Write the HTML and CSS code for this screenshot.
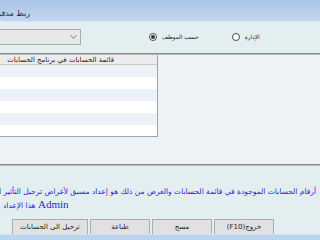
FILE: index.html
```html
<!DOCTYPE html>
<html>
	<head>
		<meta charset="UTF-8">
		<title>ربط مدقق الحسابات</title>
		<link rel="stylesheet" href="styles.css">
	</head>
	<body>
		<div class="win">
			<div class="titlebar">
				<div class="title">ربط مدقق الحسابات مع برنامج الحسابات</div>
			</div>
			<div class="top">
				<div class="combo">
					<svg class="chev" width="7" height="4" viewBox="0 0 7 4"><path d="M0.5 0.5 L3.5 3.2 L6.5 0.5" fill="none" stroke="#707070" stroke-width="1"/></svg>
				</div>
				<div class="radio r1">
					<span class="dot on"></span>
					<span class="lbl">حسب الموظف</span>
				</div>
				<div class="radio r2">
					<span class="dot"></span>
					<span class="lbl">الإدارة</span>
				</div>
			</div>
			<div class="sep"></div>
			<div class="middle">
				<div class="list">
					<div class="list-head">قائمة الحسابات في برنامج الحسابات</div>
					<ul class="rows">
						<li></li>
						<li></li>
						<li></li>
						<li></li>
						<li></li>
						<li></li>
					</ul>
				</div>
			</div>
			<div class="sep"></div>
			<div class="bottom">
				<div class="note">
					<p class="line1">أرقام الحسابات الموجودة في قائمة الحسابات والغرض من ذلك هو إعداد مسبق لأغراض ترحيل التأثير المالي</p>
					<p class="line2"><span class="en">Admin</span> هذا الإعداد</p>
				</div>
				<div class="buttons">
					<div class="btn b1">ترحيل الى الحسابات</div>
					<div class="btn b2">طباعة</div>
					<div class="btn b3">مسح</div>
					<div class="btn b4">(F10)خروج</div>
				</div>
			</div>
			<div class="strip"></div>
		</div>
	</body>
</html>
```

FILE: styles.css
```css
*{
	padding: 0;
	margin: 0;
	box-sizing: border-box;
}
li{
	list-style: none;
}
body{
	width: 320px;
	height: 240px;
	overflow: hidden;
	font-family: "DejaVu Sans", sans-serif;
	font-size: 7px;
	color: #222;
}
.win{
	width: 320px;
	height: 240px;
	display: flex;
	flex-direction: column;
	background: #e3eef1;
}
.titlebar{
	height: 22px;
	background: linear-gradient(#a9c4e7, #c3d6ee);
	border-bottom: 1px solid #d6e4f1;
	display: flex;
	align-items: center;
}
.title{
	width: 30px;
	direction: rtl;
	white-space: nowrap;
	overflow: hidden;
	font-size: 8px;
	color: #1c2a44;
	padding-top: 5px;
}
.top{
	height: 31px;
	display: flex;
	align-items: center;
}
.combo{
	width: 82px;
	height: 16px;
	margin-left: -1px;
	margin-top: -1px;
	background: #e8e8e8;
	border: 1px solid #adadad;
	display: flex;
	align-items: center;
	justify-content: flex-end;
	padding-right: 3px;
}
.radio{
	display: flex;
	align-items: center;
	margin-top: -1px;
}
.r1{
	margin-left: 68px;
}
.r2{
	margin-left: 33px;
}
.dot{
	width: 8px;
	height: 8px;
	border-radius: 50%;
	border: 1px solid #4a4a4a;
	background: #fff;
	display: flex;
	align-items: center;
	justify-content: center;
}
.dot.on::after{
	content: "";
	width: 4px;
	height: 4px;
	border-radius: 50%;
	background: #333;
}
.lbl{
	margin-left: 5px;
	font-size: 5.8px;
	direction: rtl;
}
.sep{
	height: 2px;
	background: #8c8c8c;
	border-bottom: 1px solid #b8b8b8;
}
.middle{
	height: 109px;
	background: #eef3f8;
}
.list{
	width: 158px;
	height: 82px;
	border-right: 1px solid #a3a3a3;
	border-bottom: 1px solid #a3a3a3;
	background: #fff;
}
.list-head{
	height: 10px;
	background: #ececec;
	border-bottom: 1px solid #c9c9c9;
	direction: rtl;
	padding-right: 43px;
	font-size: 7px;
	line-height: 10px;
	white-space: nowrap;
	overflow: hidden;
}
.rows li{
	height: 12px;
}
.rows li:nth-child(odd){
	background: #edf2f9;
}
.bottom{
	height: 68px;
	display: flex;
	flex-direction: column;
}
.note{
	padding-top: 20px;
	color: #2727d8;
	font-size: 7.5px;
	line-height: 12px;
}
.line1{
	width: 316px;
	direction: rtl;
	white-space: nowrap;
	overflow: hidden;
}
.line2{
	direction: rtl;
	text-align: left;
	padding-left: 3px;
}
.en{
	font-family: "Liberation Serif", serif;
	font-size: 11px;
}
.buttons{
	display: flex;
	gap: 2px;
	margin-top: 7px;
	padding-left: 12px;
}
.btn{
	height: 16px;
	background: #e1e1e1;
	border: 1px solid #adadad;
	font-size: 7px;
	line-height: 14px;
	text-align: center;
	white-space: nowrap;
}
.b1{
	width: 76px;
}
.b2,.b3,.b4{
	width: 60px;
}
.strip{
	flex: 1;
	background: #bcd5ee;
	border-top: 1px solid #d2e3f3;
}
```
